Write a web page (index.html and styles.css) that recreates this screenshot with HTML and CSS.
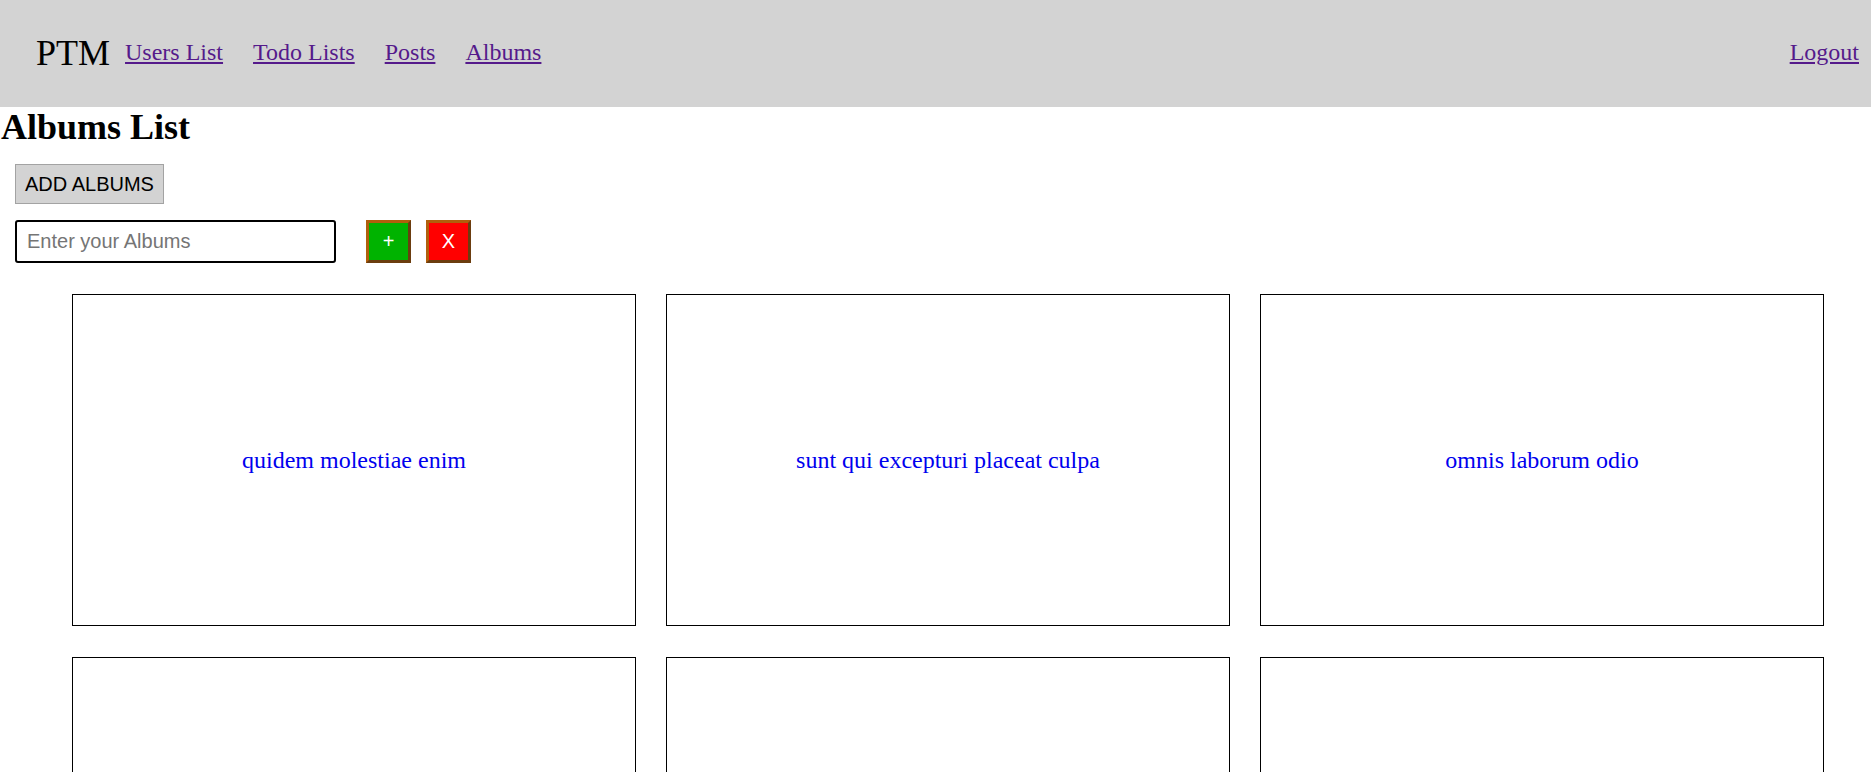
FILE: index.html
```html
<!DOCTYPE html>
<html lang="en">
<head>
<meta charset="utf-8">
<title>PTM - Albums List</title>
<link rel="stylesheet" href="styles.css">
</head>
<body>
<header class="topbar">
  <span class="brand">PTM</span>
  <nav class="nav">
    <a class="nav-link" href="#users">Users List</a>
    <a class="nav-link" href="#todos">Todo Lists</a>
    <a class="nav-link" href="#posts">Posts</a>
    <a class="nav-link" href="#albums">Albums</a>
  </nav>
  <a class="nav-link logout" href="#logout">Logout</a>
</header>
<main class="page">
  <h2 class="title">Albums List</h2>
  <div class="controls">
    <button class="add-btn" type="button">ADD ALBUMS</button>
    <div class="add-row">
      <input class="album-input" type="text" placeholder="Enter your Albums">
      <button class="square-btn ok" type="button">+</button>
      <button class="square-btn cancel" type="button">X</button>
    </div>
  </div>
  <section class="grid">
    <div class="card"><span class="card-title">quidem molestiae enim</span></div>
    <div class="card"><span class="card-title">sunt qui excepturi placeat culpa</span></div>
    <div class="card"><span class="card-title">omnis laborum odio</span></div>
    <div class="card"><span class="card-title">non esse culpa molestiae omnis sed optio</span></div>
    <div class="card"><span class="card-title">eaque aut omnis a</span></div>
    <div class="card"><span class="card-title">natus impedit quibusdam illo est</span></div>
  </section>
</main>
</body>
</html>
```

FILE: styles.css
```css
html, body {
  margin: 0;
  padding: 0;
  background: #ffffff;
  font-family: "Liberation Serif", "Times New Roman", serif;
  color: #000;
}

.topbar {
  box-sizing: border-box;
  height: 107px;
  background: #d3d3d3;
  display: flex;
  align-items: center;
  padding: 0 12px 3px 36px;
}

.brand {
  font-size: 36px;
  line-height: 41px;
  padding-top: 3px;
}

.nav {
  display: flex;
  align-items: center;
}

.nav-link {
  font-size: 24px;
  color: #551a8b;
  text-decoration: underline;
  margin: 0 15px;
}

.logout {
  margin: 0 0 0 auto;
}

.page {
  display: flex;
  flex-direction: column;
}

.title {
  font-size: 36px;
  font-weight: bold;
  line-height: 36px;
  margin: 2px 0 0 0;
  padding-left: 1px;
}

.controls {
  display: flex;
  flex-direction: column;
  align-items: flex-start;
  gap: 16px;
  padding-left: 15px;
  margin-top: 19px;
}

.add-btn {
  box-sizing: border-box;
  height: 40px;
  padding: 0 9px;
  background: #d3d3d3;
  border: 1px solid #a3a3a3;
  border-radius: 0;
  font-family: "Liberation Sans", Arial, sans-serif;
  font-size: 20px;
  color: #000;
}

.add-row {
  display: flex;
  align-items: center;
  gap: 15px;
}

.album-input {
  box-sizing: border-box;
  width: 321px;
  height: 43px;
  border: 2px solid #000;
  border-radius: 3px;
  padding: 0 10px;
  margin: 0 15px 0 0;
  font-family: "Liberation Sans", Arial, sans-serif;
  font-size: 20px;
  color: #000;
  outline: none;
}

.album-input::placeholder {
  color: #757575;
}

.square-btn {
  box-sizing: border-box;
  width: 45px;
  height: 43px;
  padding: 0;
  border-style: solid;
  border-width: 3px;
  border-color: #b05f0c #6b3d0f #6b3d0f #b05f0c;
  font-family: "Liberation Sans", Arial, sans-serif;
  font-size: 20px;
  color: #fff;
  display: flex;
  align-items: center;
  justify-content: center;
}

.square-btn.ok {
  background: #00b300;
}

.square-btn.cancel {
  background: #ff0000;
}

.grid {
  display: grid;
  grid-template-columns: repeat(3, 564px);
  grid-auto-rows: 332px;
  column-gap: 30px;
  row-gap: 31px;
  padding: 0 0 30px 72px;
  margin-top: 31px;
}

.card {
  box-sizing: border-box;
  border: 1px solid #000;
  display: flex;
  align-items: center;
  justify-content: center;
}

.card-title {
  font-size: 24px;
  color: #0000ee;
}
```
